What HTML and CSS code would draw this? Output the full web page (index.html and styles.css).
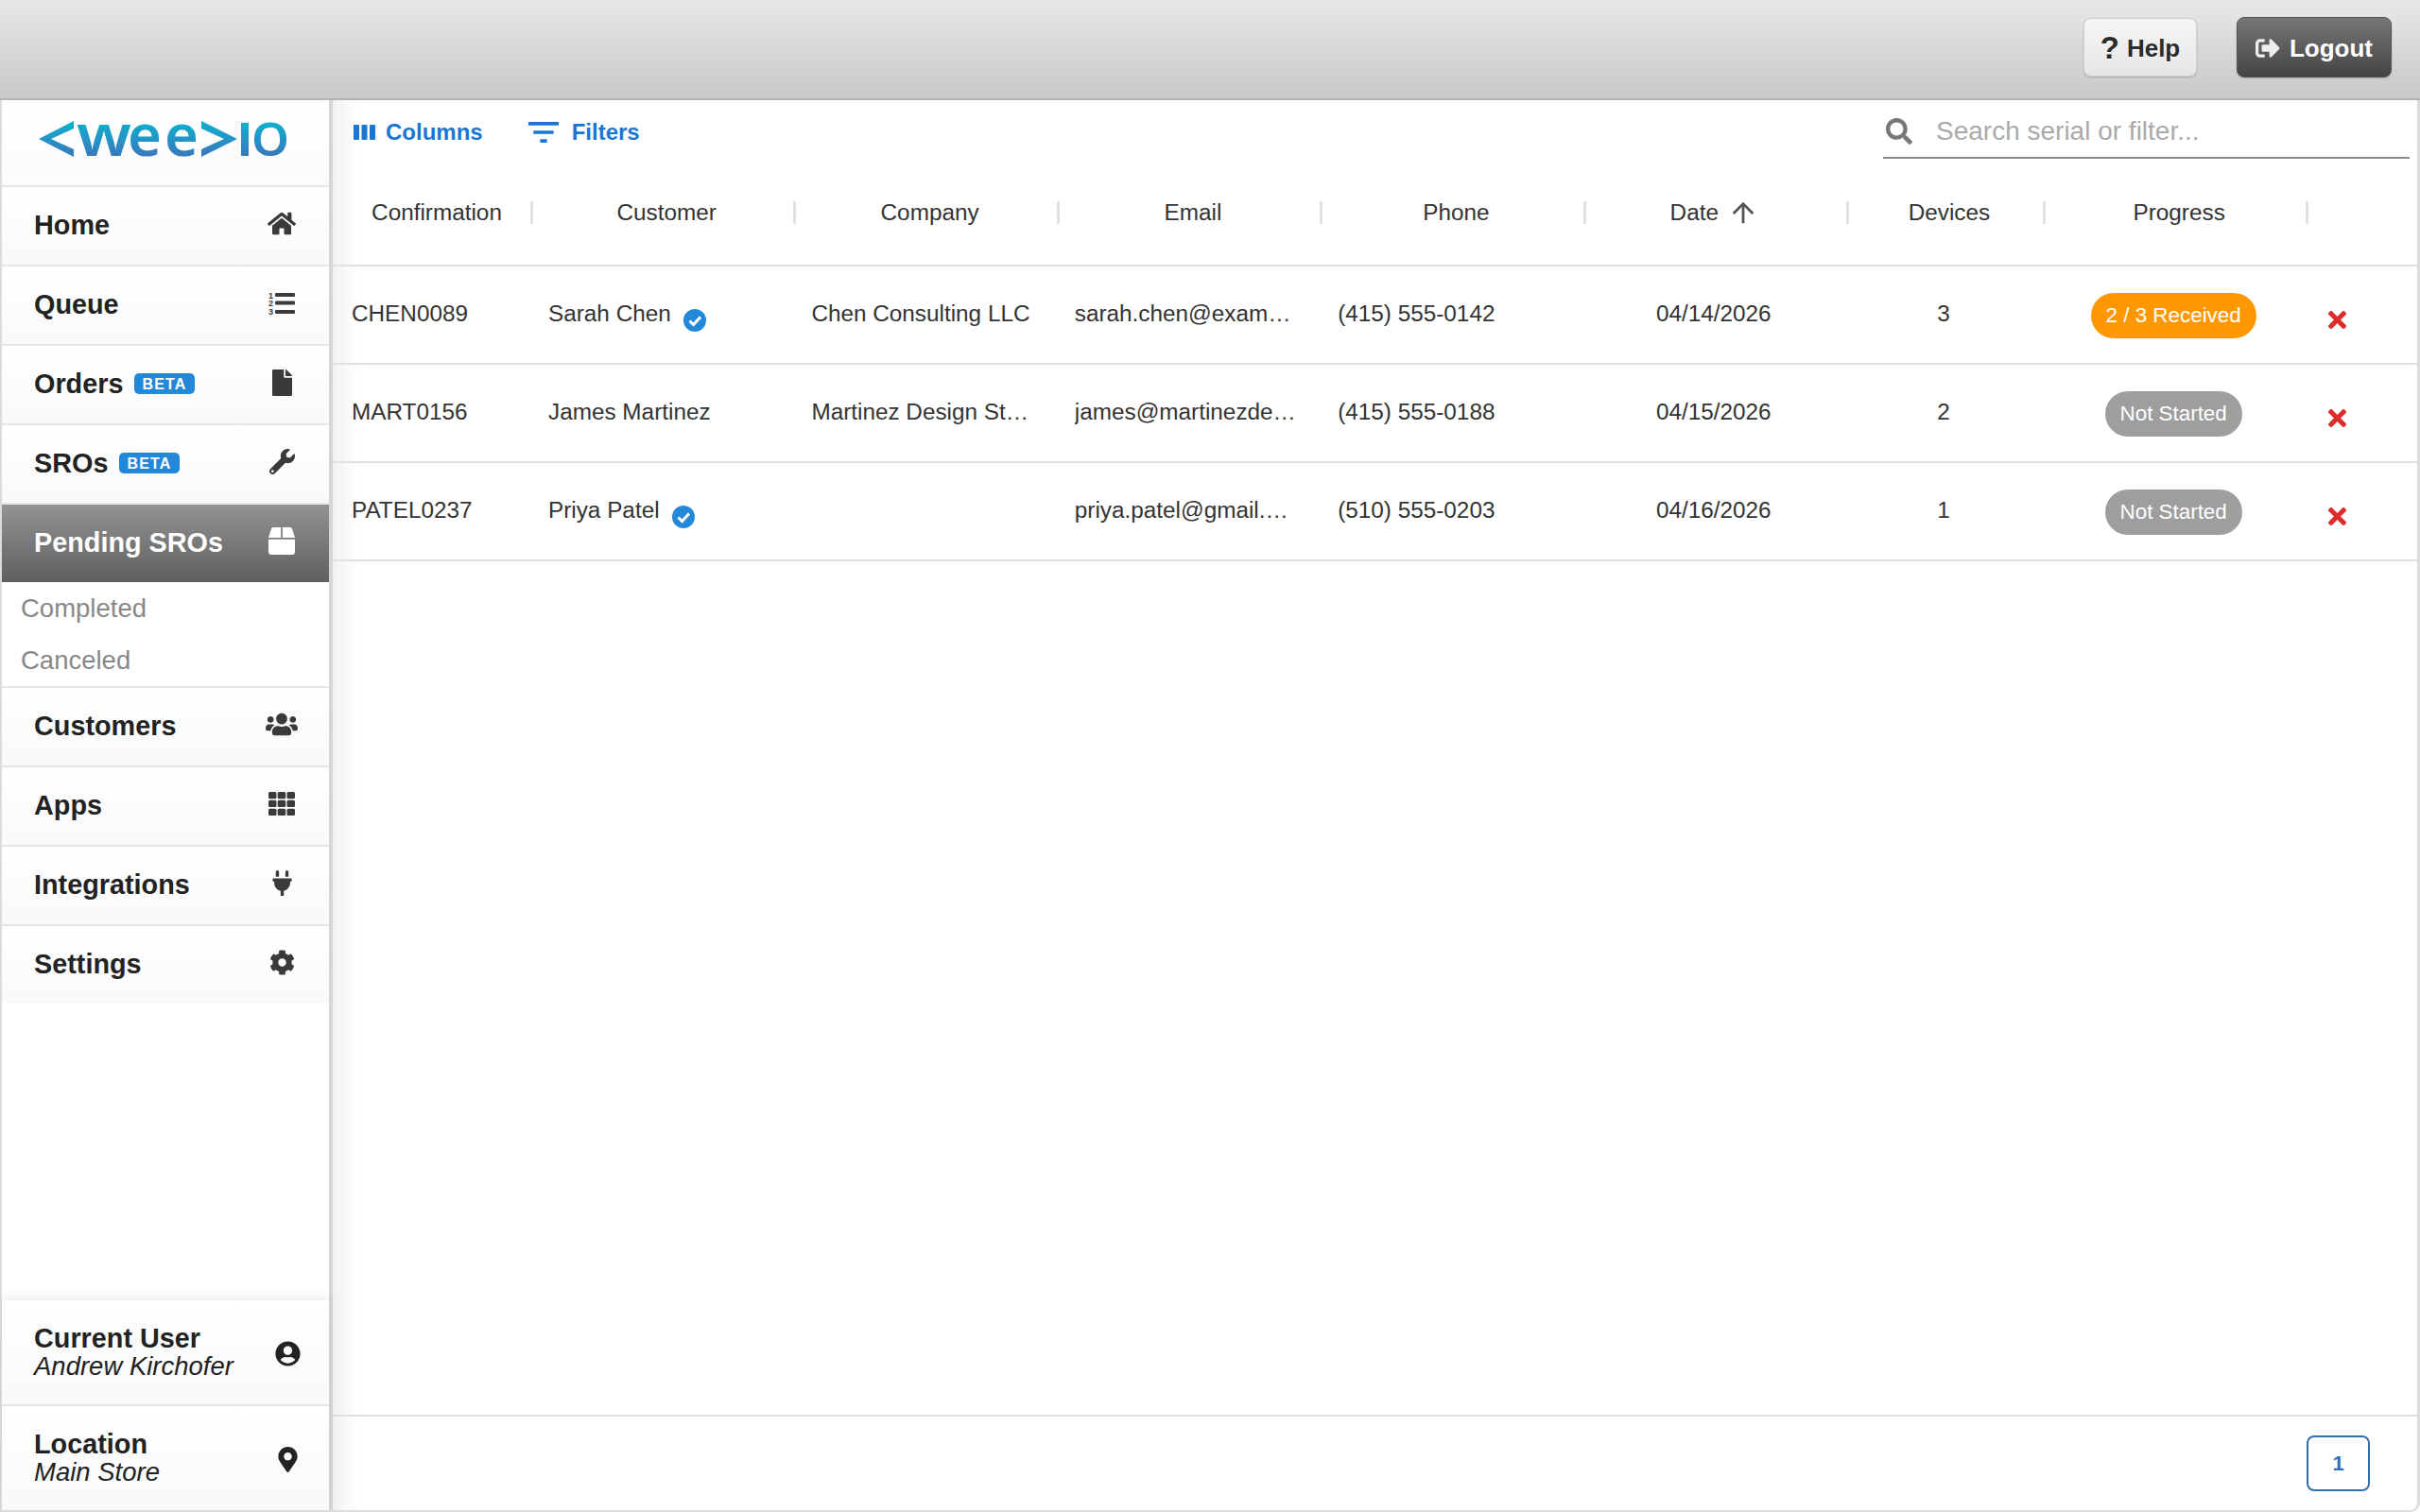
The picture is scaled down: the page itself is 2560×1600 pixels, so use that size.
FILE: index.html
```html
<!DOCTYPE html>
<html lang="en">

<head>
  <meta charset="UTF-8" />
  <title>Pending SROs</title>
  <link rel="stylesheet" href="styles.css">
</head>

<body>
  <header class="topbar">
    <button class="btn btn-help"><span class="help-mark">?</span>Help</button>
    <button class="btn btn-logout">
      <svg class="logout-icon" viewBox="0 0 512 512"><path d="M497 273L329 441c-15 15-41 4.500-41-17v-96H152c-13.300 0-24-10.700-24-24v-96c0-13.300 10.700-24 24-24h136V88c0-21.400 25.900-32 41-17l168 168c9.300 9.400 9.300 24.600 0 34zM192 436v-40c0-6.600-5.400-12-12-12H96c-17.700 0-32-14.300-32-32V160c0-17.700 14.300-32 32-32h84c6.600 0 12-5.400 12-12V76c0-6.600-5.400-12-12-12H96c-53 0-96 43-96 96v192c0 53 43 96 96 96h84c6.600 0 12-5.400 12-12z"/></svg>
      Logout
    </button>
  </header>

  <div class="layout">
    <aside class="sidebar">
      <div class="logo">
        <svg class="logo-mark" width="270" height="50" viewBox="0 0 270 50">
          <defs>
            <linearGradient id="logoFill" gradientUnits="userSpaceOnUse" x1="0" y1="2" x2="0" y2="40">
              <stop offset="0" stop-color="#0db2d0" />
              <stop offset="1" stop-color="#3b76bc" />
            </linearGradient>
          </defs>
          <polygon fill="url(#logoFill)" points="37,2 37,10 13,21 37,32 37,40 0,21" />
          <text class="logo-text" x="40" y="39" textLength="58" lengthAdjust="spacingAndGlyphs" fill="url(#logoFill)">w</text>
          <text class="logo-text" x="94" y="39" textLength="36" lengthAdjust="spacingAndGlyphs" fill="url(#logoFill)">e</text>
          <text class="logo-text" x="133" y="39" textLength="36" lengthAdjust="spacingAndGlyphs" fill="url(#logoFill)">e</text>
          <polygon fill="url(#logoFill)" points="172,2 172,10 196,21 172,32 172,40 210,21" />
          <rect x="214" y="4" width="8" height="35" fill="url(#logoFill)" />
          <text class="logo-text logo-caps" x="225" y="39" textLength="40" lengthAdjust="spacingAndGlyphs" fill="url(#logoFill)">O</text>
        </svg>
      </div>

      <nav class="nav">
        <a class="nav-item">
          <span class="nav-label">Home</span>
          <span class="nav-icon"><svg width="30" height="27" viewBox="0 0 576 512"><path d="M280.370 148.260L96 300.110V464a16 16 0 0 0 16 16l112.060-.29a16 16 0 0 0 15.920-16V368a16 16 0 0 1 16-16h64a16 16 0 0 1 16 16v95.640a16 16 0 0 0 16 16.050L464 480a16 16 0 0 0 16-16V300L295.670 148.260a12.190 12.190 0 0 0-15.300 0zM571.600 251.470L488 182.560V44.050a12 12 0 0 0-12-12h-56a12 12 0 0 0-12 12v72.610L318.470 43a48 48 0 0 0-61 0L4.340 251.470a12 12 0 0 0-1.600 16.900l25.500 31A12 12 0 0 0 45.150 301l235.220-193.740a12.190 12.190 0 0 1 15.300 0L530.900 301a12 12 0 0 0 16.900-1.600l25.500-31a12 12 0 0 0-1.700-16.930z"/></svg></span>
        </a>
        <a class="nav-item">
          <span class="nav-label">Queue</span>
          <span class="nav-icon">
            <svg width="28" height="24" viewBox="0 0 28 24">
              <text class="list-num" x="0" y="7">1</text>
              <text class="list-num" x="0" y="15">2</text>
              <text class="list-num" x="0" y="24">3</text>
              <rect x="7" y="1" width="21" height="4" rx="1" />
              <rect x="7" y="9.500" width="21" height="4" rx="1" />
              <rect x="7" y="19" width="21" height="4" rx="1" />
            </svg>
          </span>
        </a>
        <a class="nav-item">
          <span class="nav-label">Orders</span>
          <span class="badge">BETA</span>
          <span class="nav-icon"><svg width="21" height="28" viewBox="0 0 384 512"><path d="M224 136V0H24C10.700 0 0 10.700 0 24v464c0 13.300 10.700 24 24 24h336c13.300 0 24-10.700 24-24V160H248c-13.200 0-24-10.800-24-24zm160-14.100v6.100H256V0h6.100c6.400 0 12.500 2.500 17 7l97.900 98c4.500 4.500 7 10.600 7 16.900z"/></svg></span>
        </a>
        <a class="nav-item">
          <span class="nav-label">SROs</span>
          <span class="badge">BETA</span>
          <span class="nav-icon"><svg width="27" height="27" viewBox="0 0 512 512"><path d="M507.730 109.100c-2.240-9.030-13.540-12.090-20.120-5.510l-74.360 74.360-67.880-11.310-11.310-67.880 74.360-74.360c6.620-6.620 3.430-17.900-5.660-20.160-47.380-11.740-99.550.91-136.580 37.930-39.640 39.640-50.550 97.100-34.050 147.200L18.740 402.760c-24.990 24.990-24.990 65.510 0 90.500 24.990 24.990 65.510 24.990 90.500 0l213.210-213.210c50.120 16.710 107.470 5.680 147.370-34.220 37.070-37.070 49.700-89.320 37.910-136.730zM64 472c-13.250 0-24-10.750-24-24 0-13.260 10.750-24 24-24s24 10.740 24 24c0 13.250-10.750 24-24 24z"/></svg></span>
        </a>
        <a class="nav-item active">
          <span class="nav-label">Pending SROs</span>
          <span class="nav-icon"><svg width="28" height="29" viewBox="0 0 512 512" preserveAspectRatio="none"><path d="M509.500 184.600L458.900 32.800C452.400 13.200 434.100 0 413.400 0H272v192h238.700c-.4-2.500-.4-5-1.200-7.400zM240 0H98.600c-20.700 0-39 13.200-45.500 32.800L2.500 184.600c-.8 2.400-.8 4.900-1.200 7.400H240V0zM0 224v240c0 26.500 21.500 48 48 48h416c26.500 0 48-21.500 48-48V224H0z"/></svg></span>
        </a>
        <div class="subnav">
          <a class="subnav-item">Completed</a>
          <a class="subnav-item">Canceled</a>
        </div>
        <a class="nav-item">
          <span class="nav-label">Customers</span>
          <span class="nav-icon"><svg width="34" height="27" viewBox="0 0 640 512"><path d="M96 224c35.300 0 64-28.700 64-64s-28.700-64-64-64-64 28.700-64 64 28.700 64 64 64zm448 0c35.300 0 64-28.700 64-64s-28.700-64-64-64-64 28.700-64 64 28.700 64 64 64zm32 32h-64c-17.600 0-33.500 7.100-45.100 18.600 40.300 22.100 68.900 62 75.100 109.400h66c17.700 0 32-14.300 32-32v-32c0-35.300-28.700-64-64-64zm-256 0c61.900 0 112-50.100 112-112S381.900 32 320 32 208 82.100 208 144s50.100 112 112 112zm76.800 32h-8.300c-20.800 10-43.900 16-68.500 16s-47.600-6-68.500-16h-8.300C179.600 288 128 339.600 128 403.200V432c0 26.500 21.500 48 48 48h288c26.500 0 48-21.500 48-48v-28.800c0-63.600-51.600-115.200-115.200-115.200zm-223.700-13.400C161.500 263.100 145.600 256 128 256H64c-35.300 0-64 28.700-64 64v32c0 17.700 14.300 32 32 32h65.900c6.300-47.400 34.900-87.300 75.200-109.400z"/></svg></span>
        </a>
        <a class="nav-item">
          <span class="nav-label">Apps</span>
          <span class="nav-icon">
            <svg width="28" height="25" viewBox="0 0 28 25">
              <rect x="0" y="0" width="8.500" height="7.300" rx="1.500" /><rect x="9.700" y="0" width="8.500" height="7.300" rx="1.500" /><rect x="19.500" y="0" width="8.500" height="7.300" rx="1.500" />
              <rect x="0" y="8.800" width="8.500" height="7.300" rx="1.500" /><rect x="9.700" y="8.800" width="8.500" height="7.300" rx="1.500" /><rect x="19.500" y="8.800" width="8.500" height="7.300" rx="1.500" />
              <rect x="0" y="17.700" width="8.500" height="7.300" rx="1.500" /><rect x="9.700" y="17.700" width="8.500" height="7.300" rx="1.500" /><rect x="19.500" y="17.700" width="8.500" height="7.300" rx="1.500" />
            </svg>
          </span>
        </a>
        <a class="nav-item">
          <span class="nav-label">Integrations</span>
          <span class="nav-icon"><svg width="21" height="27" viewBox="0 0 384 512"><path d="M320 32a32 32 0 0 0-64 0v96h64Zm48 128H16A16 16 0 0 0 0 176v32a16 16 0 0 0 16 16H32v32A160.070 160.070 0 0 0 160 412.800V512h64V412.800A160.070 160.070 0 0 0 352 256V224h16a16 16 0 0 0 16-16V176A16 16 0 0 0 368 160ZM128 32a32 32 0 0 0-64 0v96h64Z"/></svg></span>
        </a>
        <a class="nav-item">
          <span class="nav-label">Settings</span>
          <span class="nav-icon"><svg width="27" height="27" viewBox="0 0 512 512"><path d="M487.400 315.700l-42.600-24.600c4.300-23.200 4.300-47 0-70.200l42.600-24.600c4.900-2.800 7.100-8.600 5.500-14-11.100-35.600-30-67.800-54.700-94.600-3.800-4.100-10-5.100-14.800-2.300L380.800 110c-17.900-15.400-38.500-27.300-60.800-35.100V25.800c0-5.600-3.900-10.500-9.400-11.700-36.700-8.200-74.300-7.800-109.200 0-5.500 1.200-9.400 6.100-9.400 11.700V75c-22.200 7.900-42.800 19.800-60.800 35.100L88.700 85.500c-4.900-2.800-11-1.900-14.800 2.300-24.700 26.700-43.600 58.900-54.700 94.600-1.700 5.400.6 11.200 5.500 14L67.300 221c-4.300 23.200-4.300 47 0 70.200l-42.600 24.600c-4.900 2.800-7.100 8.600-5.500 14 11.100 35.600 30 67.800 54.700 94.600 3.800 4.100 10 5.100 14.800 2.300l42.600-24.600c17.900 15.400 38.500 27.300 60.800 35.100v49.200c0 5.600 3.900 10.500 9.400 11.700 36.700 8.200 74.300 7.800 109.200 0 5.500-1.200 9.400-6.100 9.400-11.700v-49.200c22.200-7.900 42.800-19.800 60.800-35.100l42.600 24.600c4.900 2.800 11 1.900 14.800-2.300 24.700-26.700 43.600-58.900 54.700-94.600 1.500-5.500-.7-11.300-5.600-14.100zM256 336c-44.100 0-80-35.900-80-80s35.900-80 80-80 80 35.900 80 80-35.900 80-80 80z"/></svg></span>
        </a>
      </nav>

      <div class="sidebar-bottom">
        <a class="bottom-item">
          <span class="bottom-text"><b>Current User</b><i>Andrew Kirchofer</i></span>
          <span class="nav-icon"><svg width="27" height="27" viewBox="0 0 496 512"><path d="M248 8C111 8 0 119 0 256s111 248 248 248 248-111 248-248S385 8 248 8zm0 96c48.600 0 88 39.400 88 88s-39.400 88-88 88-88-39.400-88-88 39.400-88 88-88zm0 344c-58.700 0-111.300-26.600-146.500-68.200 18.800-35.400 55.600-59.800 98.500-59.800 2.400 0 4.800.4 7.100 1.100 13 4.200 26.600 6.900 40.900 6.900 14.300 0 28-2.700 40.900-6.900 2.300-.7 4.700-1.100 7.100-1.100 42.900 0 79.700 24.400 98.500 59.800C359.300 421.400 306.700 448 248 448z"/></svg></span>
        </a>
        <a class="bottom-item">
          <span class="bottom-text"><b>Location</b><i>Main Store</i></span>
          <span class="nav-icon"><svg width="21" height="27" viewBox="0 0 384 512"><path d="M172.268 501.670C26.970 291.031 0 256 0 192 0 85.961 85.961 0 192 0s192 85.961 192 192c0 64-26.970 99.031-172.268 309.670-9.535 13.774-29.930 13.773-39.464 0zM192 272c44.183 0 80-35.817 80-80s-35.817-80-80-80-80 35.817-80 80 35.817 80 80 80z"/></svg></span>
        </a>
      </div>
    </aside>

    <main class="main">
      <div class="toolbar">
        <a class="tool">
          <svg width="23" height="16" viewBox="0 0 23 16"><rect width="6" height="16" rx="1"/><rect x="8.500" width="6" height="16" rx="1"/><rect x="17" width="6" height="16" rx="1"/></svg>
          Columns
        </a>
        <a class="tool tool-filters">
          <svg width="32" height="22" viewBox="3 6 18 12" preserveAspectRatio="none"><path d="M10 18h4v-2h-4v2zM3 6v2h18V6H3zm3 7h12v-2H6v2z"/></svg>
          Filters
        </a>
        <div class="search">
          <svg width="28" height="28" viewBox="0 0 512 512"><path d="M505 442.700L405.300 343c-4.500-4.500-10.600-7-17-7H372c27.600-35.300 44-79.700 44-128C416 93.100 322.900 0 208 0S0 93.100 0 208s93.100 208 208 208c48.300 0 92.700-16.400 128-44v16.300c0 6.400 2.500 12.500 7 17l99.700 99.700c9.400 9.400 24.600 9.400 33.900 0l28.300-28.300c9.400-9.400 9.400-24.600.1-34zM208 336c-70.700 0-128-57.200-128-128 0-70.700 57.200-128 128-128 70.700 0 128 57.200 128 128 0 70.700-57.200 128-128 128z"/></svg>
          <span class="search-placeholder">Search serial or filter...</span>
        </div>
      </div>

      <div class="table">
        <div class="row head">
          <div class="th">Confirmation</div>
          <div class="th">Customer</div>
          <div class="th">Company</div>
          <div class="th">Email</div>
          <div class="th">Phone</div>
          <div class="th th-date">Date
            <svg class="sort-icon" width="34" height="34" viewBox="0 0 24 24"><path d="M4 12l1.410 1.410L11 7.830V20h2V7.830l5.580 5.590L20 12l-8-8-8 8z"/></svg>
          </div>
          <div class="th">Devices</div>
          <div class="th">Progress</div>
          <div class="th th-blank"></div>
        </div>

        <div class="row">
          <div class="td">CHEN0089</div>
          <div class="td td-name">Sarah Chen
            <svg class="verified" viewBox="0 0 24 24"><circle cx="12" cy="12" r="12"/><polyline points="6.500,12.500 10.500,16.500 18,8.500"/></svg>
          </div>
          <div class="td"><span class="clip">Chen Consulting LLC</span></div>
          <div class="td"><span class="clip">sarah.chen@example.com</span></div>
          <div class="td">(415) 555-0142</div>
          <div class="td td-center">04/14/2026</div>
          <div class="td td-center">3</div>
          <div class="td td-pill"><span class="pill pill-orange">2 / 3 Received</span></div>
          <div class="td td-action"><svg class="remove" viewBox="0 80 352 352"><path d="M242.720 256l100.070-100.070c12.280-12.280 12.280-32.190 0-44.480l-22.240-22.240c-12.280-12.280-32.190-12.280-44.480 0L176 189.280 75.930 89.210c-12.280-12.280-32.190-12.280-44.480 0L9.210 111.450c-12.280 12.280-12.280 32.190 0 44.480L109.280 256 9.210 356.070c-12.280 12.280-12.280 32.190 0 44.480l22.240 22.240c12.280 12.280 32.200 12.280 44.480 0L176 322.720l100.070 100.070c12.280 12.280 32.200 12.280 44.480 0l22.240-22.240c12.280-12.280 12.280-32.190 0-44.480L242.720 256z"/></svg></div>
        </div>

        <div class="row">
          <div class="td">MART0156</div>
          <div class="td td-name">James Martinez</div>
          <div class="td"><span class="clip">Martinez Design Studio</span></div>
          <div class="td"><span class="clip">james@martinezdesign.com</span></div>
          <div class="td">(415) 555-0188</div>
          <div class="td td-center">04/15/2026</div>
          <div class="td td-center">2</div>
          <div class="td td-pill"><span class="pill">Not Started</span></div>
          <div class="td td-action"><svg class="remove" viewBox="0 80 352 352"><path d="M242.720 256l100.070-100.070c12.280-12.280 12.280-32.190 0-44.480l-22.240-22.240c-12.280-12.280-32.190-12.280-44.480 0L176 189.280 75.930 89.210c-12.280-12.280-32.190-12.280-44.480 0L9.210 111.450c-12.280 12.280-12.280 32.190 0 44.480L109.280 256 9.210 356.070c-12.280 12.280-12.280 32.190 0 44.480l22.240 22.240c12.280 12.280 32.200 12.280 44.480 0L176 322.720l100.070 100.070c12.280 12.280 32.200 12.280 44.480 0l22.240-22.240c12.280-12.280 12.280-32.190 0-44.480L242.720 256z"/></svg></div>
        </div>

        <div class="row">
          <div class="td">PATEL0237</div>
          <div class="td td-name">Priya Patel
            <svg class="verified" viewBox="0 0 24 24"><circle cx="12" cy="12" r="12"/><polyline points="6.500,12.500 10.500,16.500 18,8.500"/></svg>
          </div>
          <div class="td"></div>
          <div class="td"><span class="clip">priya.patel@gmail.com</span></div>
          <div class="td">(510) 555-0203</div>
          <div class="td td-center">04/16/2026</div>
          <div class="td td-center">1</div>
          <div class="td td-pill"><span class="pill">Not Started</span></div>
          <div class="td td-action"><svg class="remove" viewBox="0 80 352 352"><path d="M242.720 256l100.070-100.070c12.280-12.280 12.280-32.190 0-44.480l-22.240-22.240c-12.280-12.280-32.190-12.280-44.480 0L176 189.280 75.930 89.210c-12.280-12.280-32.190-12.280-44.480 0L9.210 111.450c-12.280 12.280-12.280 32.190 0 44.480L109.280 256 9.210 356.070c-12.280 12.280-12.280 32.190 0 44.480l22.240 22.240c12.280 12.280 32.200 12.280 44.480 0L176 322.720l100.070 100.070c12.280 12.280 32.200 12.280 44.480 0l22.240-22.240c12.280-12.280 12.280-32.190 0-44.480L242.720 256z"/></svg></div>
        </div>
      </div>

      <div class="table-footer">
        <button class="page-btn">1</button>
      </div>
    </main>
  </div>
</body>

</html>
```

FILE: styles.css
```css
* {
  margin: 0;
  padding: 0;
  box-sizing: border-box;
}

body {
  width: 2560px;
  height: 1600px;
  overflow: hidden;
  background: #fff;
  font-family: "Liberation Sans", Arial, sans-serif;
  color: #333;
}

a {
  display: flex;
  color: inherit;
  text-decoration: none;
}

/* top bar */
.topbar {
  height: 106px;
  display: flex;
  align-items: center;
  justify-content: flex-end;
  gap: 42px;
  padding: 0 30px 4px 0;
  background: linear-gradient(#e8e7ea, #c9c9c9);
  border-bottom: 2px solid #b2b2b2;
}

.btn {
  display: flex;
  align-items: center;
  justify-content: center;
  padding-top: 2px;
  border-radius: 8px;
  font-family: inherit;
  font-size: 26px;
  font-weight: bold;
}

.btn-help {
  width: 120px;
  height: 62px;
  gap: 8px;
  color: #2b2b2b;
  background: linear-gradient(#f6f6f6, #e6e6e6);
  border: 1px solid #cfcfcf;
  box-shadow: 0 1px 2px rgba(0, 0, 0, .2);
  text-shadow: 0 1px 0 #fff;
}

.help-mark {
  font-size: 33px;
}

.btn-logout {
  width: 164px;
  height: 64px;
  gap: 10px;
  color: #fff;
  background: linear-gradient(#767676, #444);
  border: 1px solid #555;
  box-shadow: 0 1px 2px rgba(0, 0, 0, .2);
}

.logout-icon {
  width: 26px;
  height: 26px;
  fill: #eee;
}

/* layout */
.layout {
  height: 1494px;
  display: flex;
}

.sidebar {
  width: 352px;
  flex: none;
  display: flex;
  flex-direction: column;
  background: #fff;
  border-left: 2px solid #dcdcdc;
  border-right: 4px solid #d6d6d6;
  border-bottom: 2px solid #dcdcdc;
}

.logo {
  height: 92px;
  flex: none;
  display: flex;
  align-items: center;
  padding-left: 39px;
  background: linear-gradient(#fff, #fbfbfb);
  border-bottom: 2px solid #e6e6e6;
}

.logo-mark {
  overflow: visible;
}

.logo-text {
  font-family: "Noto Sans", sans-serif;
  font-size: 62px;
  font-weight: 600;
}

.logo-caps {
  font-size: 49px;
}

.nav {
  flex: 1;
}

.nav-item {
  height: 84px;
  display: flex;
  align-items: center;
  padding: 0 30px 2px 34px;
  background: linear-gradient(#fff, #f9f9f9);
  border-bottom: 2px solid #e6e6e6;
  color: #222;
  font-size: 28.800px;
  font-weight: bold;
}

.nav-item:last-child {
  border-bottom: none;
  height: 82px;
}

.nav-item.active {
  height: 82px;
  color: #fff;
  background: linear-gradient(#939393, #5f5f5f);
  border-bottom: none;
}

.nav-item.active .nav-icon svg {
  fill: #fff;
}

.nav-label {
  white-space: nowrap;
}

.nav-icon {
  width: 40px;
  margin-left: auto;
  margin-bottom: 3px;
  display: flex;
  justify-content: center;
}

.nav-icon svg {
  fill: #3a3a3a;
}

.list-num {
  font-size: 9px;
  font-weight: bold;
  fill: #3a3a3a;
}

.badge {
  margin-left: 12px;
  padding: 3px 8px 2px;
  border-radius: 5px;
  background: #2488d8;
  color: #fff;
  font-size: 16px;
  line-height: 17px;
  letter-spacing: 1.200px;
}

.subnav {
  border-bottom: 2px solid #e6e6e6;
}

.subnav-item {
  height: 55px;
  display: flex;
  align-items: center;
  padding-left: 20px;
  color: #888;
  font-size: 27.500px;
}

.sidebar-bottom {
  flex: none;
  box-shadow: 0 -4px 10px rgba(0, 0, 0, .07);
}

.bottom-item {
  height: 110px;
  display: flex;
  align-items: center;
  padding: 0 24px 0 34px;
  background: linear-gradient(#fff, #f9f9f9);
  color: #222;
  font-size: 28.800px;
}

.bottom-item:first-child {
  height: 112px;
  border-bottom: 2px solid #e6e6e6;
}

.bottom-text {
  display: flex;
  flex-direction: column;
  line-height: 29px;
}

.bottom-text i {
  font-size: 27.500px;
}

.bottom-item .nav-icon {
  margin-bottom: 0;
  margin-top: 3px;
}

.bottom-item .nav-icon svg {
  fill: #222;
}

/* main panel */
.main {
  flex: 1;
  min-width: 0;
  display: flex;
  flex-direction: column;
  border-right: 3px solid #ddd;
  border-bottom: 2px solid #ddd;
  border-bottom-right-radius: 10px;
  box-shadow: inset 30px 0 24px -20px rgba(0, 0, 0, .07);
}

.toolbar {
  height: 62px;
  flex: none;
  display: flex;
  align-items: flex-start;
  padding: 20px 8px 0 22px;
}

.tool {
  display: flex;
  align-items: center;
  gap: 11px;
  height: 28px;
  color: #1976d2;
  font-size: 24px;
  font-weight: bold;
  white-space: nowrap;
}

.tool svg {
  fill: #1976d2;
}

.tool-filters {
  margin-left: 48px;
  gap: 14px;
}

.search {
  width: 557px;
  height: 44px;
  margin-left: auto;
  margin-top: -2px;
  display: flex;
  align-items: flex-start;
  gap: 25px;
  padding-left: 3px;
  padding-top: 1px;
  border-bottom: 2px solid #8c8c8c;
}

.search svg {
  fill: #777;
  flex: none;
}

.search-placeholder {
  color: #aaa;
  font-size: 28px;
  line-height: 28px;
}

.table {
  flex: 1;
  padding-left: 4px;
}

.row {
  height: 104px;
  display: grid;
  grid-template-columns: 208px repeat(5, 278.400px) 208px 278.400px 1fr;
  margin-left: -4px;
  padding-left: 4px;
  border-bottom: 2px solid #e0e0e0;
}

.row.head {
  height: 114px;
}

.th {
  position: relative;
  display: flex;
  align-items: center;
  justify-content: center;
  gap: 9px;
  padding: 2px 0 0 4px;
  font-size: 24.320px;
}

.th::after {
  content: "";
  position: absolute;
  right: 0;
  top: 45px;
  width: 3px;
  height: 24px;
  background: #e0e0e0;
}

.th-date {
  padding: 2px 6px 0 0;
}

.th-blank::after {
  display: none;
}

.sort-icon {
  fill: #555;
}

.td {
  min-width: 0;
  display: flex;
  align-items: center;
  padding: 0 28px 3px 16px;
  font-size: 24.320px;
  white-space: nowrap;
}

.td-center {
  justify-content: center;
  padding: 0 8px 3px 0;
}

.td-pill {
  justify-content: center;
  padding: 2px 8px 0 0;
}

.td-name {
  gap: 13px;
}

.clip {
  overflow: hidden;
  text-overflow: ellipsis;
}

.verified {
  width: 24px;
  height: 24px;
  margin-top: 15px;
  flex: none;
}

.verified circle {
  fill: #2488d8;
}

.verified polyline {
  fill: none;
  stroke: #fff;
  stroke-width: 3;
}

.pill {
  height: 48px;
  display: flex;
  align-items: center;
  padding: 0 16px;
  border-radius: 24px;
  background: #9e9e9e;
  color: #fff;
  font-size: 22.400px;
}

.pill-orange {
  background: #ff9800;
}

.td-action {
  padding: 11px 0 0 21px;
}

.remove {
  width: 19px;
  height: 19px;
  fill: #e02b2b;
}

.table-footer {
  height: 101px;
  flex: none;
  display: flex;
  align-items: center;
  justify-content: flex-end;
  padding-right: 50px;
  border-top: 2px solid #e0e0e0;
}

.page-btn {
  width: 67px;
  height: 59px;
  border: 2px solid #2f70b5;
  border-radius: 8px;
  background: #fff;
  color: #2f70b5;
  font-family: inherit;
  font-size: 22px;
  font-weight: bold;
}
```
